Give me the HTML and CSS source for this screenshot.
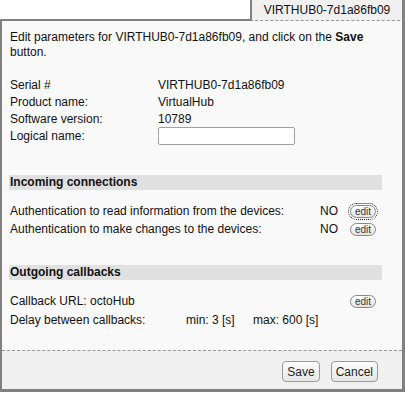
FILE: index.html
```html
<!DOCTYPE html>
<html>
<head>
    <title>VIRTHUB0-7d1a86fb09</title>
    <link rel="stylesheet" href="styles.css">
</head>
<body>
    <div class="tab-row">
        <div class="tab-spacer"></div>
        <div class="tab">VIRTHUB0-7d1a86fb09</div>
    </div>

    <div class="panel">
        <div class="panel-body">
            <p class="intro">Edit parameters for VIRTHUB0-7d1a86fb09, and click on the <b>Save</b> button.</p>

            <div class="info-grid">
                <span>Serial #</span><span>VIRTHUB0-7d1a86fb09</span>
                <span>Product name:</span><span>VirtualHub</span>
                <span>Software version:</span><span>10789</span>
                <span>Logical name:</span><span><input type="text" class="name-input"></span>
            </div>

            <h4 class="section-bar">Incoming connections</h4>
            <div class="auth-grid">
                <span>Authentication to read information from the devices:</span>
                <span>NO</span>
                <button class="edit-btn focused">edit</button>

                <span>Authentication to make changes to the devices:</span>
                <span>NO</span>
                <button class="edit-btn">edit</button>
            </div>

            <h4 class="section-bar second">Outgoing callbacks</h4>
            <div class="auth-grid">
                <span class="wide">Callback URL: octoHub</span>
                <button class="edit-btn">edit</button>
            </div>
            <div class="delay-row">
                <span>Delay between callbacks:</span>
                <span>min: 3 [s]</span>
                <span>max: 600 [s]</span>
            </div>
        </div>

        <div class="panel-footer">
            <button class="dlg-btn">Save</button>
            <button class="dlg-btn">Cancel</button>
        </div>
    </div>
</body>
</html>
```

FILE: styles.css
```css
body {
    margin: 0;
    padding: 0;
    font-family: "Liberation Sans", Arial, sans-serif;
    font-size: 12px;
    color: #111;
    background: #ffffff;
}

.tab-row {
    display: flex;
    height: 21px;
}

.tab-spacer {
    flex: 1;
    border-bottom: 2px solid #808080;
}

.tab {
    width: 150px;
    background-color: #f0f0f0;
    border-left: 2px solid #808080;
    border-right: 3px solid #808080;
    border-bottom: 1px dashed #999;
    text-align: center;
    line-height: 20px;
    height: 20px;
}

.panel {
    border-left: 2px solid #808080;
    border-right: 3px solid #808080;
    border-bottom: 3px solid #808080;
    background-color: #f9f9f9;
}

.panel-body {
    padding: 9px 20px 23px 7px;
    height: 297px;
}

.intro {
    margin: 0 0 16px 1px;
    line-height: 15px;
}

.info-grid {
    display: grid;
    grid-template-columns: 148px 1fr;
    grid-auto-rows: 17px;
    align-items: center;
    padding-left: 1px;
}

.info-grid span:nth-last-child(-n+2) {
    height: 21px;
    display: flex;
    align-items: center;
}

.name-input {
    box-sizing: border-box;
    width: 137px;
    height: 18px;
    border: 1px solid #a0a0a0;
    border-radius: 2px;
    background: #fff;
    margin: 0;
}

.section-bar {
    margin: 31px 0 12px 0;
    background-color: #e0e0e0;
    font-size: 12px;
    line-height: 15px;
    height: 15px;
    padding-left: 1px;
}

.section-bar.second {
    margin-top: 27px;
}

.auth-grid {
    display: grid;
    grid-template-columns: 310px 30px auto;
    grid-auto-rows: 18px;
    align-items: center;
    padding-left: 1px;
}

.auth-grid .wide {
    grid-column: 1 / 3;
}

.delay-row {
    display: grid;
    grid-template-columns: 176px 67px auto;
    height: 19px;
    align-items: center;
    padding-left: 1px;
}

.edit-btn {
    box-sizing: border-box;
    width: 26px;
    height: 13px;
    padding: 0;
    border: 1px solid #888;
    border-radius: 7px;
    background: linear-gradient(#ffffff, #e2e2e2);
    font-family: "Liberation Sans", Arial, sans-serif;
    font-size: 10px;
    line-height: 11px;
    color: #333;
}

.edit-btn.focused {
    outline: 1px dotted #222;
    outline-offset: 1px;
}

.panel-footer {
    border-top: 1px dashed #999;
    background-color: #f0f0f0;
    height: 39px;
    display: flex;
    justify-content: flex-end;
    align-items: flex-start;
    gap: 11px;
    padding: 10px 24px 0 0;
    box-sizing: border-box;
}

.dlg-btn {
    height: 21px;
    padding: 0 4px;
    border: 1px solid #999;
    border-radius: 4px;
    background: linear-gradient(#fdfdfd, #e6e6e6);
    font-family: "Liberation Sans", Arial, sans-serif;
    font-size: 12px;
    color: #222;
}
```
